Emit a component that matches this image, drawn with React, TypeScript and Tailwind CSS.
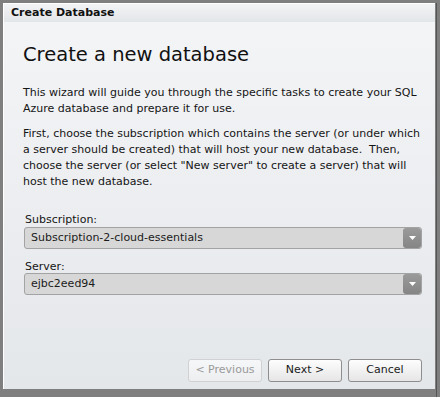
import React from "react";

const font = { fontFamily: '"DejaVu Sans", Verdana, sans-serif' };

function Select({ value }: { value: string }) {
  return (
    <div className="relative flex h-[22px] w-full items-center rounded-[3px] border border-[#a3a3a3] bg-[#d7d7d7]">
      <span className="pl-[6px] text-[11px] text-[#1b1b1b]">{value}</span>
      <div className="absolute right-0 top-0 flex h-[20px] w-[18px] items-center justify-center rounded-[3px] bg-gradient-to-b from-[#9a9a9a] to-[#858585]">
        <svg width="7" height="4" viewBox="0 0 7 4">
          <polygon points="0,0 7,0 3.5,4" fill="#ffffff" />
        </svg>
      </div>
    </div>
  );
}

function Btn({ label, disabled }: { label: string; disabled?: boolean }) {
  return (
    <div
      className={
        "flex h-[23px] w-[74px] items-center justify-center rounded-[3px] border text-[11px] " +
        (disabled
          ? "border-[#cfd1d3] bg-gradient-to-b from-[#f6f7f8] to-[#eceef0] text-[#9a9a9a]"
          : "border-[#8e8e8e] bg-gradient-to-b from-[#fdfdfd] to-[#e6e6e6] text-[#1b1b1b]")
      }
    >
      {label}
    </div>
  );
}

export default function App() {
  return (
    <div className="h-[397px] w-[440px] overflow-hidden bg-[#7f7f7f]" style={font}>
      <div className="flex">
        <div className="ml-[3px] mt-[3px] flex h-[386px] w-[432px] flex-col border-l border-t border-[#ffffff] bg-gradient-to-b from-[#f4f5f7] to-[#e4e7ea]">
          <div className="flex h-[18px] items-center bg-gradient-to-b from-[#f2f3f5] to-[#e3e6e9] pl-[7px] text-[11px] font-bold text-[#111]">
            Create Database
          </div>
          <div className="flex flex-1 flex-col pl-[19px] pr-[13px]">
            <div className="mt-[20px] text-[19.5px] leading-[26px] text-[#111]">Create a new database</div>
            <p className="mt-[17px] text-[11px] leading-[16px] text-[#151515]">
              This wizard will guide you through the specific tasks to create your SQL Azure database and prepare it for use.
            </p>
            <p className="mt-[9px] text-[11px] leading-[16px] text-[#151515]">
              First, choose the subscription which contains the server (or under which a server should be created) that will host your new database.&nbsp; Then, choose the server (or select "New server" to create a server) that will host the new database.
            </p>
            <div className="mt-[24px] pl-[2px] text-[11px] leading-[12px] text-[#151515]">Subscription:</div>
            <div className="mt-[1px] pl-[1px]">
              <Select value="Subscription-2-cloud-essentials" />
            </div>
            <div className="mt-[12px] pl-[2px] text-[11px] leading-[12px] text-[#151515]">Server:</div>
            <div className="mt-0 pl-[1px]">
              <Select value="ejbc2eed94" />
            </div>
            <div className="mt-auto mb-[7px] flex justify-end gap-[6px]">
              <Btn label="< Previous" disabled />
              <Btn label="Next >" />
              <Btn label="Cancel" />
            </div>
          </div>
        </div>
        <div className="ml-[1px] mt-[3px] h-[394px] w-[1px] bg-[#555]" />
      </div>
      <div className="whitespace-nowrap pl-[2px] text-[11px] leading-[12px] text-[#2a2a2a]">
        en objects.&nbsp; You can create a new database by using either the SQL
      </div>
    </div>
  );
}
